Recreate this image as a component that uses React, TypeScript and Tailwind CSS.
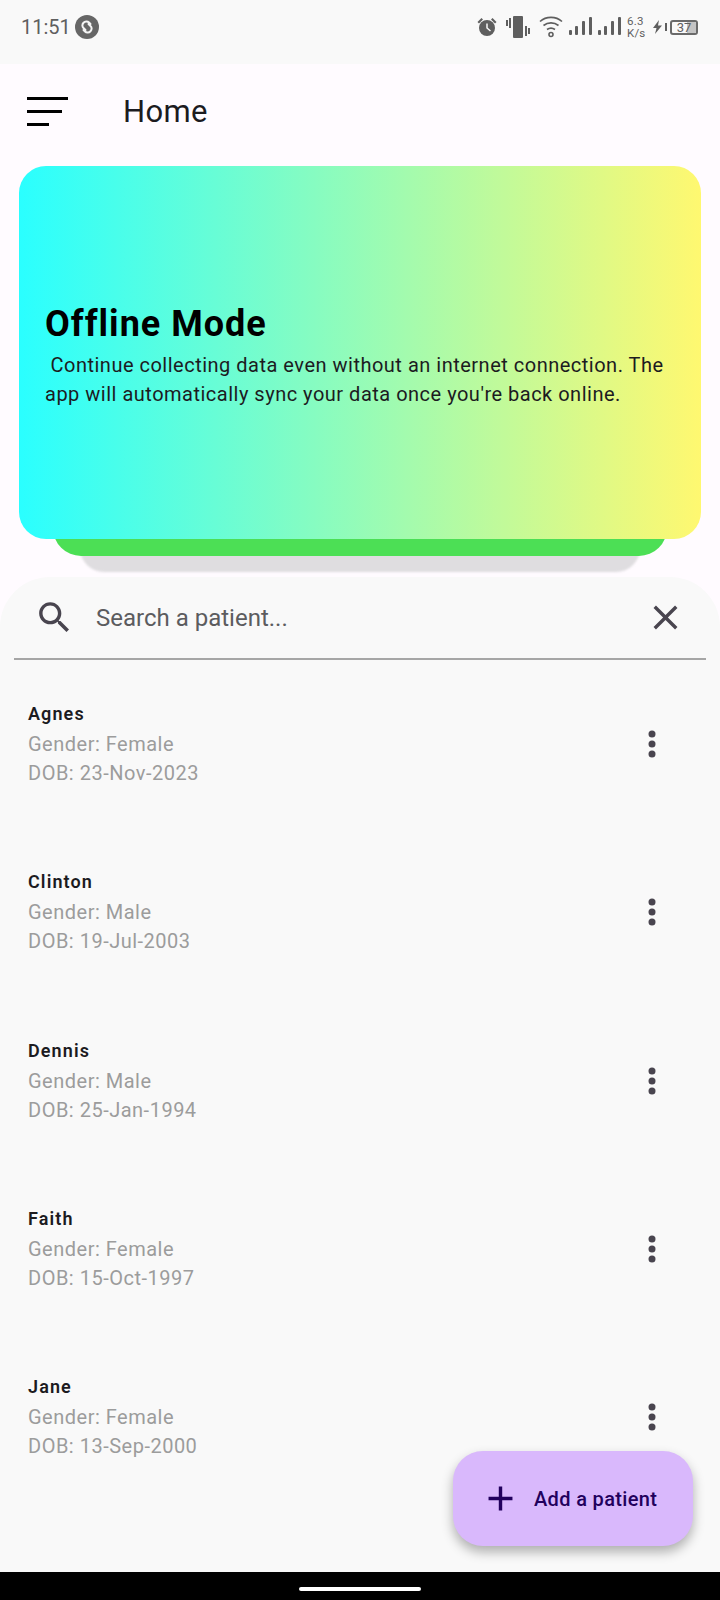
const patients = [
  { name: "Agnes", gender: "Female", dob: "23-Nov-2023" },
  { name: "Clinton", gender: "Male", dob: "19-Jul-2003" },
  { name: "Dennis", gender: "Male", dob: "25-Jan-1994" },
  { name: "Faith", gender: "Female", dob: "15-Oct-1997" },
  { name: "Jane", gender: "Female", dob: "13-Sep-2000" },
];

function SignalBars() {
  return (
    <svg width="23" height="20" viewBox="0 0 23 20" fill="currentColor">
      <rect x="0" y="13" width="3" height="5" rx="1" />
      <rect x="6" y="9" width="3" height="9" rx="1" />
      <rect x="13" y="4" width="3" height="14" rx="1" />
      <rect x="20" y="0" width="3" height="18" rx="1" />
    </svg>
  );
}

function StatusIcons() {
  return (
    <div className="flex items-center text-[#5f5f5f]">
      <svg width="20" height="20" viewBox="0 0 20 20" fill="currentColor">
        <circle cx="10" cy="11" r="8" />
        <path d="M0.500 5 L4.500 1 L6 2.500 L2 6.500Z M19.500 5 L15.500 1 L14 2.500 L18 6.500Z" />
        <path d="M10 6.500v4.500l3.500 3" stroke="#f9f9f9" strokeWidth="1.500" fill="none" />
      </svg>
      <svg className="ml-[9px]" width="24" height="24" viewBox="0 0 24 24" fill="currentColor">
        <rect x="7" y="1" width="10" height="22" rx="1" />
        <rect x="3" y="3" width="2" height="10" />
        <rect x="0" y="5" width="2" height="6" />
        <rect x="19" y="11" width="2" height="10" />
        <rect x="22" y="13" width="2" height="6" />
      </svg>
      <svg className="ml-[9px]" width="24" height="24" viewBox="0 0 24 24" fill="none" stroke="currentColor" strokeWidth="1.600">
        <path d="M1 6.500 C7 1 17 1 23 6.500" />
        <path d="M4.500 10.500 C9 7 15 7 19.500 10.500" />
        <path d="M8 14.500 C10.500 12.800 13.500 12.800 16 14.500" />
        <circle cx="12" cy="19.500" r="2" />
      </svg>
      <div className="ml-[6px]">
        <SignalBars />
      </div>
      <div className="ml-[6px]">
        <SignalBars />
      </div>
      <div className="ml-[6px] flex w-[17px] flex-col items-start text-[11.500px] leading-[12px] tracking-[0.2px]">
        <span>6.3</span>
        <span>K/s</span>
      </div>
      <svg className="ml-[9px]" width="9" height="14" viewBox="0 0 9 14" fill="currentColor">
        <path d="M6 0 L0 8 H3.500 L2 14 L9 5.500 H5Z" />
      </svg>
      <div className="ml-[3px] h-[8px] w-[2px] bg-[#5f5f5f]" />
      <div className="relative ml-[3px] flex h-[15px] w-[28px] items-center justify-center overflow-hidden rounded-[3px] border-2 border-[#6a6a6a] text-[13px] leading-none">
        <div className="absolute inset-y-0 left-[15px] w-[9px] bg-[#c4c4c4]" />
        <span className="relative">37</span>
      </div>
    </div>
  );
}

function PatientRow({ name, gender, dob }: { name: string; gender: string; dob: string }) {
  return (
    <div className="flex h-[168.300px] items-start pl-[28px] pr-[50px] pt-[2px]">
      <div className="min-w-0 flex-1">
        <h3 className="mb-[2px] text-[18px] font-semibold leading-[28px] tracking-[1.100px] text-[#1c1b1f]">{name}</h3>
        <p className="text-[20px] leading-[29px] tracking-[0.5px] text-[#9c9c9c]">Gender: {gender}</p>
        <p className="text-[20px] leading-[29px] tracking-[0.5px] text-[#9c9c9c]">DOB: {dob}</p>
      </div>
      <svg className="mt-[26px] text-[#49454f]" width="36" height="36" viewBox="0 0 36 36" fill="currentColor">
        <circle cx="18" cy="8" r="3.500" />
        <circle cx="18" cy="18" r="3.500" />
        <circle cx="18" cy="28" r="3.500" />
      </svg>
    </div>
  );
}

export default function App() {
  return (
    <div className="relative flex h-[1600px] w-[720px] flex-col overflow-hidden bg-[#fffbff] font-['Roboto',sans-serif]">
      <header className="flex h-[64px] items-center justify-between bg-[#f9f9f9] pb-[10px] pl-[21px] pr-[22px]">
        <div className="flex items-center gap-[4px]">
          <span className="text-[20px] text-[#5f5f5f]">11:51</span>
          <svg width="24" height="24" viewBox="0 0 24 24">
            <circle cx="12" cy="12" r="12" fill="#666666" />
            <path
              d="M15.500 9 L14 7.500 C12.500 6 10 6.200 8.500 7.800 C7 9.400 7 11.600 8.500 13 L10.500 15 M8.500 15 L10 16.500 C11.500 18 14 17.800 15.500 16.200 C17 14.600 17 12.400 15.500 11 L13.500 9"
              stroke="#f4f4f4"
              strokeWidth="2"
              fill="none"
              strokeLinecap="round"
            />
          </svg>
        </div>
        <StatusIcons />
      </header>

      <div className="flex h-[94px] items-center pt-[1px]">
        <div className="ml-[27px] mt-[-1px] flex w-[41px] flex-col gap-[10px]">
          <div className="h-[3px] w-[41px] bg-black" />
          <div className="h-[3px] w-[35px] bg-black" />
          <div className="h-[3px] w-[22px] bg-black" />
        </div>
        <h1 className="ml-[55px] text-[31px] leading-none tracking-[0.3px] text-[#1c1b1f]">Home</h1>
      </div>

      <div className="relative mx-[19px] mt-[8px] h-[373px] shrink-0">
        <div className="absolute bottom-[-33px] left-[61px] right-[61px] h-[60px] rounded-[24px] bg-[#dfdde0] blur-[1px]" />
        <div className="absolute bottom-[-17px] left-[34px] right-[34px] h-[60px] rounded-[28px] bg-[#4cdf55]" />
        <div className="relative flex h-full flex-col justify-center rounded-[27px] bg-[linear-gradient(90deg,#2affff_0%,#fff870_100%)] pl-[26px] pr-[20px] pt-[6px]">
          <h2 className="text-[36px] font-bold leading-[42px] tracking-[1px] text-black">Offline Mode</h2>
          <p className="mt-[6px] whitespace-pre-wrap text-[20px] leading-[29px] tracking-[0.5px] text-[#1c1b1f]">
            {" Continue collecting data even without an internet connection. The app will automatically sync your data once you're back online."}
          </p>
        </div>
      </div>

      <section className="mt-[38px] flex min-h-0 flex-1 flex-col rounded-t-[50px] bg-[#f9f9f9]">
        <div className="flex h-[81px] items-center pl-[34px] pr-[34px]">
          <svg className="text-[#49454f]" width="41" height="41" viewBox="0 0 24 24" fill="currentColor">
            <path d="M15.500 14h-.79l-.28-.27C15.410 12.590 16 11.110 16 9.500 16 5.910 13.090 3 9.500 3S3 5.910 3 9.500 5.910 16 9.500 16c1.610 0 3.090-.59 4.230-1.570l.27.28v.79l5 4.990L20.490 19l-4.990-5zm-6 0C7.010 14 5 11.990 5 9.500S7.010 5 9.500 5 14 7.010 14 9.500 11.990 14 9.500 14z" />
          </svg>
          <span className="ml-[21px] flex-1 text-[24px] text-[#5c5c5f]">Search a patient...</span>
          <svg className="text-[#49454f]" width="41" height="41" viewBox="0 0 24 24" fill="currentColor">
            <path d="M19 6.410L17.590 5 12 10.590 6.410 5 5 6.410 10.590 12 5 17.590 6.410 19 12 13.410 17.590 19 19 17.590 13.410 12z" />
          </svg>
        </div>
        <div className="mx-[14px] h-[2px] bg-[#a6a6a6]" />
        <div className="mt-[38px]">
          {patients.map((p) => (
            <PatientRow key={p.name} {...p} />
          ))}
        </div>
      </section>

      <button className="absolute bottom-[54px] right-[27px] flex h-[95px] w-[240px] items-center rounded-[30px] bg-[#d9b8fc] pl-[27px] text-[#22005d] shadow-[0_6px_12px_rgba(0,0,0,0.3)]">
        <svg width="41" height="41" viewBox="0 0 24 24" fill="currentColor">
          <path d="M19 13h-6v6h-2v-6H5v-2h6V5h2v6h6v2z" />
        </svg>
        <span className="ml-[13px] text-[20px] font-medium tracking-[0.35px]">Add a patient</span>
      </button>

      <div className="absolute bottom-0 left-0 right-0 flex h-[28px] items-start justify-center bg-black pt-[15px]">
        <div className="h-[4px] w-[122px] rounded-full bg-white" />
      </div>
    </div>
  );
}
